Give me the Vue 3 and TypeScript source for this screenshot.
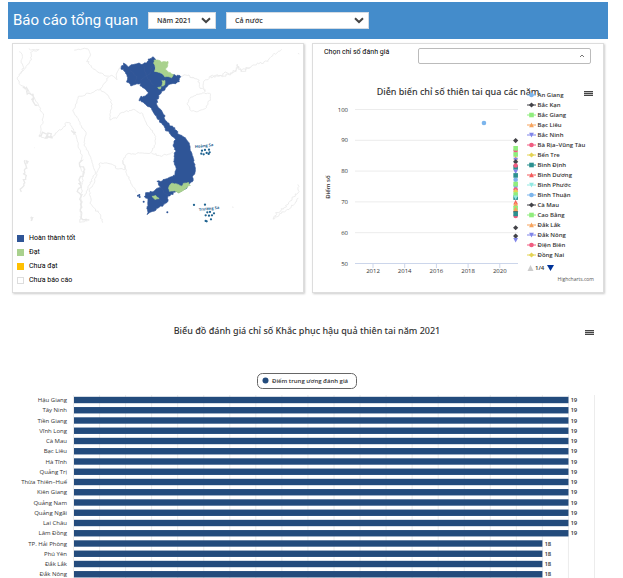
<script setup lang="ts">
import { ref } from 'vue'

type Point = [number, number]
type Shape = 'circle' | 'diamond' | 'square' | 'up' | 'down'

const year = ref('Năm 2021')
const region = ref('Cả nước')
const indicator = ref('')

const statuses = [
  { name: 'Hoàn thành tốt', kind: 'good' },
  { name: 'Đạt', kind: 'pass' },
  { name: 'Chưa đạt', kind: 'fail' },
  { name: 'Chưa báo cáo', kind: 'none' },
]

/* Map geometry: every outline is a coarse polyline that gets a jagged coast */
let seed = 7
function random(): number {
  seed = (seed * 16807) % 2147483647
  return seed / 2147483647 - 0.5
}

function parse(text: string): Point[] {
  return text.split(' ').map((pair) => pair.split(',').map(Number) as Point)
}

function roughen(text: string, amount: number, closed = false): string {
  const pts = parse(text)
  if (closed) pts.push(pts[0])
  const out: string[] = []
  for (let i = 0; i < pts.length - 1; i++) {
    const [x1, y1] = pts[i]
    const [x2, y2] = pts[i + 1]
    const steps = Math.max(1, Math.round(Math.hypot(x2 - x1, y2 - y1) / 5))
    for (let s = 0; s < steps; s++) {
      const t = s / steps
      const x = x1 + (x2 - x1) * t + random() * amount
      const y = y1 + (y2 - y1) * t + random() * amount
      out.push(`${x.toFixed(1)},${y.toFixed(1)}`)
    }
  }
  if (!closed) out.push(pts[pts.length - 1].join(','))
  return `M${out.join('L')}${closed ? 'Z' : ''}`
}

const westBorders = [
  '60,45 68,60 62,75 70,95 58,115 52,130 62,148 80,160 95,175 110,200 120,215 130,240 125,270 118,300 140,305 160,300 180,280 195,270 197,258 210,262 218,280 228,300 235,330 245,355 240,390 250,412 245,462 240,557 262,555',
  '85,40 118,42 95,46 92,75 75,95 62,112',
  '225,42 262,38 270,55 262,75 275,95 290,105 325,122 335,118 352,132 350,110 362,90',
  '325,125 315,140 300,158 275,170 235,182 228,205 218,225 235,250 245,270 258,290 250,320 262,345 270,360 285,412 262,462 250,482',
  '300,158 330,185 335,210 328,250 350,245 365,230 400,222 430,235 440,265 465,295 465,330 450,350 380,355 368,375 378,400 350,400 340,384 300,380 290,422 270,462 272,502 285,522 300,532 308,560',
  '368,375 380,412 395,447 412,469',
  '452,352 485,360 520,348',
].map((line) => roughen(line, 5))

const roughCoasts = [
  '66,152 78,158 86,170 96,178 104,198 112,210',
  '122,298 132,292 140,302 150,294 156,304 140,300',
  '80,372 72,402 76,440 64,468',
  '240,372 250,402 240,432 236,462 246,500 244,552 268,552',
  '88,548 96,550 94,542',
  '76,375 84,380 80,384',
  '100,333 104,335',
  '215,280 226,288 222,296',
].map((line) => roughen(line, 12))

const eastCoasts = [
  roughen('212,108 230,105 265,120 270,145 285,152 280,125 300,112 350,105 375,98 385,80 395,95 440,72 470,65 490,45 515,28', 7),
  roughen('300,108 340,102 372,95 382,72 392,92 420,84', 9),
  roughen('232,190 240,175 270,160 303,160 300,180 285,205 260,217 240,210', 4, true),
  roughen('566,435 565,460 550,470 530,495 500,520 490,540 505,525 540,505 565,475', 7),
  'M564,40l4,2M366,501l5,1',
]

const mainland = roughen(
  '32,82 42,70 48,72 55,80 65,75 80,70 95,72 103,68 113,66 115,58 130,50 136,56 136,90 160,105 190,105 212,110 208,120 195,130 180,130 172,140 160,150 150,160 143,175 140,195 155,215 165,225 163,235 175,250 190,262 205,280 222,290 228,298 240,310 242,330 248,345 252,370 256,388 250,405 248,425 238,432 225,446 205,457 195,455 185,465 175,467 172,485 158,498 140,505 128,515 113,522 112,505 115,480 103,468 108,460 125,455 150,442 143,425 165,420 195,405 197,385 190,350 197,335 190,315 195,300 183,282 165,270 165,260 150,245 135,225 122,205 105,190 85,180 92,170 105,168 115,163 110,150 95,140 90,133 75,133 62,138 52,125 55,115 48,100 38,90',
  5,
  true,
)

const greenAreas = [
  '132,60 145,60 155,66 175,65 174,78 165,88 175,95 190,104 186,112 165,110 155,100 135,94 137,80 131,70',
  '157,122 166,122 165,134 156,138',
  '144,142 154,141 152,146 145,147',
  '183,430 197,432 215,438 220,430 235,427 240,435 225,448 205,458 195,452 178,455 175,445',
  '125,468 137,466 147,477 135,478',
].map((line) => roughen(line, 3, true))

const inlets = roughen('90,120 120,100 125,80', 3) + roughen('60,90 80,110 75,125', 3) +
  roughen('100,75 110,110 130,135', 3) + roughen('130,470 150,480 165,495', 3) + roughen('150,440 165,460 175,465', 3)

const islands: Point[] = [
  [276, 332], [285, 330], [297, 329], [299, 337], [290, 339], [281, 343], [296, 342], [274, 341],
  [252, 495], [285, 494], [292, 517], [300, 516], [312, 520], [287, 526], [297, 527], [306, 526],
  [303, 538], [287, 543], [290, 544],
]
const nearIslands: Point[] = [[88, 465], [89, 471], [101, 485], [172, 517], [84, 467], [200, 126], [206, 124]]

/* Line chart */
const palette: Record<string, string> = {
  blue: '#7cb5ec', dark: '#434348', green: '#90ed7d', orange: '#f7a35c', purple: '#8085e9',
  pink: '#f15c80', yellow: '#e4d354', teal: '#2b908f', red: '#f45b5b', aqua: '#91e8e1',
}

const outlines: Record<Shape, string> = {
  circle: 'M-2.3,0a2.3,2.3 0 1,0 4.6,0a2.3,2.3 0 1,0 -4.6,0Z',
  diamond: 'M0,-2.6L2.6,0L0,2.6L-2.6,0Z',
  square: 'M-2.3,-2.3H2.3V2.3H-2.3Z',
  up: 'M0,-2.4L2.4,2.2H-2.4Z',
  down: 'M0,2.4L2.4,-2.2H-2.4Z',
}

const provinces: { name: string; color: string; shape: Shape }[] = [
  { name: 'An Giang', color: 'blue', shape: 'circle' },
  { name: 'Bắc Kạn', color: 'dark', shape: 'diamond' },
  { name: 'Bắc Giang', color: 'green', shape: 'square' },
  { name: 'Bạc Liêu', color: 'orange', shape: 'up' },
  { name: 'Bắc Ninh', color: 'purple', shape: 'down' },
  { name: 'Bà Rịa–Vũng Tàu', color: 'pink', shape: 'circle' },
  { name: 'Bến Tre', color: 'yellow', shape: 'diamond' },
  { name: 'Bình Định', color: 'teal', shape: 'square' },
  { name: 'Bình Dương', color: 'red', shape: 'up' },
  { name: 'Bình Phước', color: 'aqua', shape: 'down' },
  { name: 'Bình Thuận', color: 'blue', shape: 'circle' },
  { name: 'Cà Mau', color: 'dark', shape: 'diamond' },
  { name: 'Cao Bằng', color: 'green', shape: 'square' },
  { name: 'Đắk Lắk', color: 'orange', shape: 'up' },
  { name: 'Đắk Nông', color: 'purple', shape: 'down' },
  { name: 'Điện Biên', color: 'pink', shape: 'circle' },
  { name: 'Đồng Nai', color: 'yellow', shape: 'diamond' },
]

const scores: { year: number; value: number; color: string; shape: Shape }[] = [
  { year: 2019, value: 95.6, color: 'blue', shape: 'circle' },
  ...(
    [
      [89.9, 'dark', 'diamond'], [86.6, 'pink', 'circle'], [87.4, 'green', 'square'], [85.4, 'green', 'square'],
      [84.2, 'orange', 'up'], [83.6, 'purple', 'down'], [83, 'dark', 'diamond'], [81.2, 'teal', 'square'],
      [81.8, 'pink', 'circle'], [79.8, 'purple', 'down'], [77.2, 'blue', 'circle'], [78.6, 'teal', 'square'],
      [75.2, 'blue', 'circle'], [75.8, 'green', 'square'], [74, 'pink', 'circle'], [73.4, 'yellow', 'diamond'],
      [71.4, 'teal', 'square'], [72.4, 'green', 'square'], [71.4, 'aqua', 'down'], [69.9, 'red', 'up'],
      [69.2, 'orange', 'up'], [66.8, 'dark', 'diamond'], [68, 'green', 'square'], [67.7, 'orange', 'up'],
      [65.4, 'pink', 'circle'], [66.1, 'teal', 'square'], [61.6, 'dark', 'diamond'], [58.9, 'dark', 'diamond'],
      [57.6, 'purple', 'down'],
    ] as [number, string, Shape][]
  ).map(([value, color, shape]) => ({ year: 2021, value, color, shape })),
]

const scoreTicks = [100, 90, 80, 70, 60, 50]
const yearTicks = [2012, 2014, 2016, 2018, 2020]
const scoreY = (value: number) => 263.5 - (value - 50) * 3.08
const yearX = (value: number) => 373 + (value - 2012) * 15.85

/* Bar chart */
const bars = [
  ...['Hậu Giang', 'Tây Ninh', 'Tiền Giang', 'Vĩnh Long', 'Cà Mau', 'Bạc Liêu', 'Hà Tĩnh', 'Quảng Trị',
    'Thừa Thiên–Huế', 'Kiên Giang', 'Quảng Nam', 'Quảng Ngãi', 'Lai Châu', 'Lâm Đồng'].map((name) => ({ name, value: 19 })),
  ...['TP. Hải Phòng', 'Phú Yên', 'Đắk Lắk', 'Đắk Nông'].map((name) => ({ name, value: 18 })),
]
const barX = (value: number) => 73.5 + value * 26.05
const barY = (index: number) => 400 + index * 10.25
</script>

<template>
  <main class="page">
    <header class="topbar">
      <h1>Báo cáo tổng quan</h1>
      <div class="picker picker-year">
        <select v-model="year" aria-label="Năm">
          <option>Năm 2021</option>
        </select>
        <svg viewBox="0 0 10 7" aria-hidden="true"><path d="M1,1.2L5,5L9,1.2" /></svg>
      </div>
      <div class="picker picker-region">
        <select v-model="region" aria-label="Khu vực">
          <option>Cả nước</option>
        </select>
        <svg viewBox="0 0 10 7" aria-hidden="true"><path d="M1,1.2L5,5L9,1.2" /></svg>
      </div>
    </header>

    <div class="cards">
      <section class="card">
        <svg class="map" viewBox="13 44 290 187">
          <g transform="translate(0 36) scale(0.3333)" class="border">
            <path v-for="(d, i) in westBorders" :key="i" :d="d" />
            <path v-for="(d, i) in roughCoasts" :key="'r' + i" :d="d" class="dense" />
          </g>
          <g transform="translate(110 40) scale(0.3333)">
            <g class="border">
              <path v-for="(d, i) in eastCoasts" :key="i" :d="d" />
            </g>
            <path :d="mainland" class="good" />
            <path :d="inlets" class="inlet" />
            <path v-for="(d, i) in greenAreas" :key="i" :d="d" class="pass" />
            <circle v-for="([x, y], i) in nearIslands" :key="'n' + i" :cx="x" :cy="y" r="3" class="good" />
            <circle v-for="([x, y], i) in islands" :key="'s' + i" :cx="x" :cy="y" r="3.4" class="sea" />
          </g>
          <text class="sea-name" x="195" y="148" transform="rotate(-6 195 148)">Hoàng Sa</text>
          <text class="sea-name" x="199" y="211" transform="rotate(-6 199 211)">Trường Sa</text>
        </svg>
        <ul class="statuses">
          <li v-for="s in statuses" :key="s.name"><i :class="['swatch', s.kind]"></i>{{ s.name }}</li>
        </ul>
      </section>

      <section class="card">
        <div class="filter">
          <label for="indicator">Chọn chỉ số đánh giá</label>
          <div class="picker picker-indicator">
            <select id="indicator" v-model="indicator">
              <option value=""></option>
            </select>
            <svg viewBox="0 0 6 4" aria-hidden="true"><path d="M1,3L3,1L5,3" /></svg>
          </div>
        </div>
        <div class="chart">
          <svg viewBox="313 66 290 226">
            <text class="title" x="458" y="95" text-anchor="middle">Diễn biến chỉ số thiên tai qua các năm</text>
            <g v-for="t in scoreTicks" :key="t">
              <line :class="t === 50 ? 'axis' : 'grid'" x1="355" x2="518" :y1="scoreY(t)" :y2="scoreY(t)" />
              <text class="tick" x="348" :y="scoreY(t) + 2" text-anchor="end">{{ t }}</text>
            </g>
            <g v-for="t in yearTicks" :key="t">
              <line class="axis" :x1="yearX(t)" :x2="yearX(t)" y1="263" y2="268" />
              <text class="tick" :x="yearX(t)" y="273" text-anchor="middle">{{ t }}</text>
            </g>
            <text class="tick strong" x="330" y="187" text-anchor="middle" transform="rotate(-90 330 187)">Điểm số</text>
            <path
              v-for="(p, i) in scores"
              :key="i"
              :d="outlines[p.shape]"
              :fill="palette[p.color]"
              :transform="`translate(${yearX(p.year)} ${scoreY(p.value)})`"
            />
            <g v-for="(p, i) in provinces" :key="p.name" :transform="`translate(531.5 ${95 + i * 10})`">
              <line x1="-4.5" x2="4.5" y1="0" y2="0" :stroke="palette[p.color]" />
              <path :d="outlines[p.shape]" :fill="palette[p.color]" />
              <text class="legend" x="6" y="2">{{ p.name }}</text>
            </g>
            <path d="M530.5,265L533.5,271H527.5Z" fill="#ccc" />
            <text class="legend" x="535" y="270">1/4</text>
            <path d="M550.5,271L547,265H554Z" fill="#039" />
            <text class="credit" x="594" y="281" text-anchor="end">Highcharts.com</text>
          </svg>
          <button class="menu menu-line" type="button" aria-label="Menu"><i></i><i></i><i></i></button>
        </div>
      </section>
    </div>

    <section class="chart">
      <svg viewBox="8 297 600 281">
        <text class="title" x="307" y="334" text-anchor="middle">Biểu đồ đánh giá chỉ số Khắc phục hậu quả thiên tai năm 2021</text>
        <rect class="legend-box" x="257.5" y="373.5" width="99" height="15" rx="5" />
        <circle class="bar" cx="265.5" cy="380.5" r="3" />
        <text class="legend" x="272" y="383">Điểm trung ương đánh giá</text>
        <line v-for="n in 21" :key="n" class="grid" :x1="barX(n - 1)" :x2="barX(n - 1)" y1="395" y2="578" />
        <g v-for="(b, i) in bars" :key="b.name">
          <text class="tick" x="67" :y="barY(i) + 2" text-anchor="end">{{ b.name }}</text>
          <rect class="bar" x="74" :y="barY(i) - 3.2" :width="barX(b.value) - 74" height="6.4" />
          <text class="value" :x="barX(b.value) + 2" :y="barY(i) + 2">{{ b.value }}</text>
        </g>
      </svg>
      <button class="menu menu-bars" type="button" aria-label="Menu"><i></i><i></i><i></i></button>
    </section>
  </main>
</template>

<style>
body {
  background: #fff;
}
</style>

<style scoped>
* {
  box-sizing: border-box;
}
.page {
  padding: 2px 15px 0 8px;
  color: #000;
  font: 7px/14px Roboto, "Liberation Sans", sans-serif;
}
svg {
  display: block;
  width: 100%;
}
.topbar {
  display: flex;
  align-items: center;
  gap: 10px;
  height: 37px;
  padding: 0 5px;
  background: #448ccb;
}
h1 {
  margin: 0;
  padding-bottom: 2px;
  color: #fff;
  font-size: 15px;
  font-weight: 400;
  line-height: 20px;
}
.picker {
  position: relative;
}
.picker select {
  display: block;
  width: 100%;
  height: 17px;
  margin: 0;
  padding: 0 8px;
  border: 1px solid #d4dbe3;
  border-radius: 0;
  background: #fff;
  color: #333;
  font: 600 7px/15px "Open Sans", "Noto Sans", sans-serif;
  appearance: none;
}
.picker svg {
  position: absolute;
  top: 5px;
  right: 5px;
  width: 10px;
  height: 7px;
  fill: none;
  stroke: #444;
  stroke-width: 2;
  pointer-events: none;
}
.picker-year {
  width: 68px;
}
.picker-region {
  width: 143px;
}
.cards {
  display: grid;
  grid-template-columns: 1fr 1fr;
  gap: 8px;
  padding: 4px;
}
.card {
  border: 1px solid #ddd;
  box-shadow: 1px 1px 2px #ccc;
}
.statuses {
  margin: 0;
  padding: 0 4px 5px;
  list-style: none;
}
.statuses li {
  display: flex;
  align-items: center;
  gap: 5px;
  height: 14px;
}
.swatch {
  width: 7px;
  height: 7px;
}
.swatch.good {
  background: #2f5597;
}
.swatch.pass {
  background: #a9d18e;
}
.swatch.fail {
  background: #ffc000;
}
.swatch.none {
  border: 1px solid #ddd;
}
.border {
  fill: none;
  stroke: #e9e9e9;
  stroke-width: 2.5;
}
.dense {
  stroke-width: 4;
}
path.good,
circle.good {
  fill: #2f5597;
}
path.good {
  stroke: #2f5597;
  stroke-width: 2;
}
path.pass {
  fill: #a9d18e;
  stroke: #a9d18e;
  stroke-width: 2;
}
.inlet {
  fill: none;
  stroke: #3f5f9a;
  stroke-width: 1;
}
.sea {
  fill: #1f6390;
}
.sea-name {
  fill: #1f6390;
  font: 700 4px "Open Sans", sans-serif;
}
.filter {
  display: flex;
  justify-content: space-between;
  padding: 4px 12px 2px 11px;
}
.filter label {
  line-height: 8px;
}
.picker-indicator {
  width: 173px;
}
.picker-indicator select {
  height: 16px;
  border-color: #bbb;
  border-radius: 2px;
}
.picker-indicator svg {
  top: 6px;
  right: 6px;
  width: 6px;
  height: 4px;
  stroke: #777;
  stroke-width: 1;
}
.chart {
  position: relative;
}
.chart text {
  font-family: "Open Sans", "Noto Sans", sans-serif;
}
.chart .title {
  fill: #333;
  font-family: "Noto Sans", "Open Sans", sans-serif;
  font-size: 9px;
  font-weight: 500;
}
.tick {
  fill: #333;
  font-size: 6px;
}
.strong {
  font-weight: 600;
}
.legend {
  fill: #333;
  font-size: 6px;
  font-weight: 600;
}
.value {
  fill: #333;
  font-size: 6px;
  font-weight: 600;
}
.credit {
  fill: #555;
  font-size: 5px;
}
.grid {
  stroke: #ececec;
}
.axis {
  stroke: #ccd6eb;
}
.bar {
  fill: #234b7c;
}
.legend-box {
  fill: #fff;
  stroke: #666;
}
.menu {
  position: absolute;
  display: flex;
  flex-direction: column;
  gap: 1px;
  width: 9px;
  padding: 1px 0;
  border: 0;
  background: #bbb;
  background-clip: content-box;
}
.menu i {
  height: 1px;
  width: 100%;
  background: #444;
}
.menu-line {
  top: 24px;
  right: 10px;
}
.menu-bars {
  top: 32px;
  right: 14px;
}
</style>
